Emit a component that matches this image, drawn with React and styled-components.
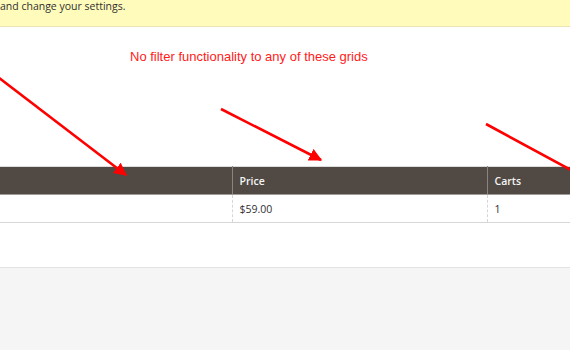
import styled, { createGlobalStyle } from "styled-components";

const GlobalStyle = createGlobalStyle`
  html, body {
    margin: 0;
    padding: 0;
    background: #f5f5f5;
  }
  body {
    font-family: "Open Sans", "Liberation Sans", sans-serif;
    color: #303030;
  }
`;

const App = () => {
  return (
    <Page>
      <GlobalStyle />
      <Notice>and change your settings.</Notice>
      <Content>
        <Annotation>No filter functionality to any of these grids</Annotation>
        <Grid>
          <thead>
            <tr>
              <HeadCell $width={232}></HeadCell>
              <HeadCell $width={255}>Price</HeadCell>
              <HeadCell>Carts</HeadCell>
            </tr>
          </thead>
          <tbody>
            <tr>
              <Cell></Cell>
              <Cell>$59.00</Cell>
              <Cell>1</Cell>
            </tr>
          </tbody>
        </Grid>
        <Spacer />
        <Arrows width="570" height="350" viewBox="0 0 570 350">
          <defs>
            <marker
              id="head"
              viewBox="0 0 10 10"
              refX="9"
              refY="5"
              markerWidth="5"
              markerHeight="5"
              markerUnits="strokeWidth"
              orient="auto"
            >
              <path d="M0 0 L10 5 L0 10 z" fill="#ff0000" />
            </marker>
          </defs>
          <line x1="-2" y1="77" x2="126" y2="175" stroke="#ff0000" strokeWidth="2.6" markerEnd="url(#head)" />
          <line x1="221" y1="109" x2="321" y2="160" stroke="#ff0000" strokeWidth="2.6" markerEnd="url(#head)" />
          <line x1="486" y1="124" x2="580" y2="175" stroke="#ff0000" strokeWidth="2.6" />
        </Arrows>
      </Content>
      <Footer />
    </Page>
  );
};

export default App;

const Page = styled.div`
  width: 570px;
  min-height: 350px;
  display: flex;
  flex-direction: column;
  background: #f5f5f5;
`;

const Notice = styled.div`
  height: 26px;
  background: #fffbbb;
  border-bottom: 1px solid #ebe4b2;
  font-size: 10.5px;
  line-height: 13px;
  color: #303030;
  box-sizing: content-box;
`;

const Content = styled.div`
  position: relative;
  background: #ffffff;
  padding-top: 18px;
  border-bottom: 1px solid #e3e3e3;
`;

const Annotation = styled.div`
  margin-left: 130px;
  height: 121px;
  font-family: "Liberation Sans", Arial, sans-serif;
  font-size: 13px;
  line-height: 24px;
  color: #ff1a1a;
`;

const Grid = styled.table`
  width: 570px;
  border-collapse: collapse;
  table-layout: fixed;
  font-size: 10.5px;
  border-top: 1px solid #dcdcdc;
`;

const HeadCell = styled.th`
  width: ${({ $width }) => ($width ? `${$width}px` : "auto")};
  height: 28px;
  box-sizing: border-box;
  background: #514943;
  color: #f5f5f5;
  font-weight: 600;
  text-align: left;
  padding: 0 7px;
  border-left: 1px solid #8a837f;
  border-bottom: 1px solid #a19c98;

  &:first-child {
    border-left: none;
  }
`;

const Cell = styled.td`
  height: 28px;
  box-sizing: border-box;
  padding: 0 7px;
  color: #303030;
  border-left: 1px dashed #d6d6d6;
  border-bottom: 1px solid #d6d6d6;

  &:first-child {
    border-left: none;
  }
`;

const Spacer = styled.div`
  height: 44px;
`;

const Footer = styled.div`
  flex: 1;
  background: #f5f5f5;
`;

const Arrows = styled.svg`
  position: absolute;
  top: -27px;
  left: 0;
  pointer-events: none;
  overflow: visible;
`;
